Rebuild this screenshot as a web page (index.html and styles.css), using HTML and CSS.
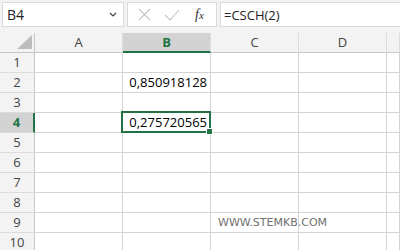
FILE: index.html
```html
<!DOCTYPE html>
<html lang="en">
<head>
    <meta charset="UTF-8">
    <title>CSCH</title>
    <link rel="stylesheet" href="styles.css">
</head>
<body>
    <div class="topbar">
        <div class="namebox">
            <span>B4</span>
            <svg class="chev" width="8" height="5" viewBox="0 0 8 5"><path d="M1 1l3 3 3-3" fill="none" stroke="#444" stroke-width="1.2"/></svg>
        </div>
        <div class="fxbox">
            <svg width="13" height="13" viewBox="0 0 13 13"><path d="M1 1l11 11M12 1L1 12" stroke="#c4c4c4" stroke-width="1.1"/></svg>
            <svg width="16" height="12" viewBox="0 0 16 12"><path d="M1 6l5 5L15 1" fill="none" stroke="#c4c4c4" stroke-width="1.1"/></svg>
            <span class="fx"><i>f</i><small>x</small></span>
        </div>
        <div class="formula">=CSCH(2)</div>
    </div>

    <div class="sheet">
        <div class="corner"></div>
        <div class="colhead">A</div>
        <div class="colhead active">B</div>
        <div class="colhead">C</div>
        <div class="colhead">D</div>
        <div class="colhead"></div>

        <div class="rowhead">1</div><div class="cell"></div><div class="cell"></div><div class="cell"></div><div class="cell"></div><div class="cell"></div>
        <div class="rowhead">2</div><div class="cell"></div><div class="cell num">0,850918128</div><div class="cell"></div><div class="cell"></div><div class="cell"></div>
        <div class="rowhead">3</div><div class="cell"></div><div class="cell"></div><div class="cell"></div><div class="cell"></div><div class="cell"></div>
        <div class="rowhead active">4</div><div class="cell"></div><div class="cell num selected">0,275720565</div><div class="cell"></div><div class="cell"></div><div class="cell"></div>
        <div class="rowhead">5</div><div class="cell"></div><div class="cell"></div><div class="cell"></div><div class="cell"></div><div class="cell"></div>
        <div class="rowhead">6</div><div class="cell"></div><div class="cell"></div><div class="cell"></div><div class="cell"></div><div class="cell"></div>
        <div class="rowhead">7</div><div class="cell"></div><div class="cell"></div><div class="cell"></div><div class="cell"></div><div class="cell"></div>
        <div class="rowhead">8</div><div class="cell"></div><div class="cell"></div><div class="cell"></div><div class="cell"></div><div class="cell"></div>
        <div class="rowhead">9</div><div class="cell"></div><div class="cell"></div><div class="cell mark"><span class="watermark">WWW.STEMKB.COM</span></div><div class="cell"></div><div class="cell"></div>
        <div class="rowhead">10</div><div class="cell"></div><div class="cell"></div><div class="cell"></div><div class="cell"></div><div class="cell"></div>
    </div>
</body>
</html>
```

FILE: styles.css
```css
body {
    margin: 0;
    width: 400px;
    height: 250px;
    overflow: hidden;
    background: #fff;
    font-family: "Open Sans", Arial, sans-serif;
    color: #000;
}
.topbar {
    display: flex;
    height: 33px;
    box-sizing: border-box;
    padding: 2px 0 0 2px;
    background: #f3f3f3;
    align-items: flex-start;
}
.namebox, .fxbox, .formula {
    height: 25px;
    box-sizing: border-box;
    background: #fff;
    border: 1px solid #dadada;
    display: flex;
    align-items: center;
}
.namebox {
    width: 122px;
    padding: 0 6px 0 4px;
    justify-content: space-between;
    font-size: 14px;
    color: #222;
}
.fxbox {
    width: 90px;
    margin-left: 3px;
    padding-left: 10px;
    gap: 13px;
}
.fx {
    font-family: "Liberation Serif", serif;
    font-size: 14px;
    color: #333;
    margin-left: 2px;
}
.fx small {
    font-size: 11px;
    font-style: italic;
}
.formula {
    flex: 1;
    margin-left: 3px;
    padding-left: 3px;
    font-size: 13px;
    color: #222;
    border-right: none;
}
.sheet {
    display: grid;
    grid-template-columns: 35px 88px 88px 88px 88px 1fr;
    grid-template-rows: repeat(11, 20px);
}
.sheet > div {
    box-sizing: border-box;
}
.corner {
    background: #f3f3f3;
    border-right: 1px solid #c6c6c6;
    border-bottom: 1px solid #c6c6c6;
    position: relative;
}
.corner::after {
    content: "";
    position: absolute;
    right: 2px;
    bottom: 3px;
    width: 15px;
    height: 14px;
    background: #bdbdbd;
    clip-path: polygon(100% 0, 100% 100%, 0 100%);
}
.colhead {
    background: #f3f3f3;
    border-right: 1px solid #dcdcdc;
    border-bottom: 1px solid #c6c6c6;
    text-align: center;
    font-size: 13px;
    line-height: 19px;
    color: #444;
}
.colhead.active {
    background: #d3d3d3;
    color: #217346;
    font-weight: bold;
    border-bottom: 2px solid #217346;
    line-height: 18px;
}
.rowhead {
    background: #f3f3f3;
    border-right: 1px solid #c6c6c6;
    border-bottom: 1px solid #dcdcdc;
    text-align: center;
    font-size: 13px;
    line-height: 19px;
    color: #444;
}
.rowhead.active {
    background: #d3d3d3;
    color: #217346;
    font-weight: bold;
    border-right: 2px solid #217346;
}
.cell {
    border-right: 1px solid #d4d4d4;
    border-bottom: 1px solid #d4d4d4;
    font-size: 13px;
    line-height: 19px;
}
.num {
    text-align: right;
    padding-right: 3px;
}
.selected {
    position: relative;
}
.selected::after {
    content: "";
    position: absolute;
    top: -2px;
    left: -2px;
    right: -1px;
    bottom: -1px;
    border: 2px solid #217346;
}
.selected::before {
    content: "";
    position: absolute;
    right: -3px;
    bottom: -3px;
    width: 5px;
    height: 5px;
    background: #217346;
    border: 1px solid #fff;
    z-index: 1;
}
.mark {
    position: relative;
}
.watermark {
    position: absolute;
    left: 7px;
    top: 3px;
    font-family: "DejaVu Sans", Verdana, sans-serif;
    font-size: 11px;
    line-height: 13px;
    color: #707070;
    white-space: nowrap;
    z-index: 1;
}
```
